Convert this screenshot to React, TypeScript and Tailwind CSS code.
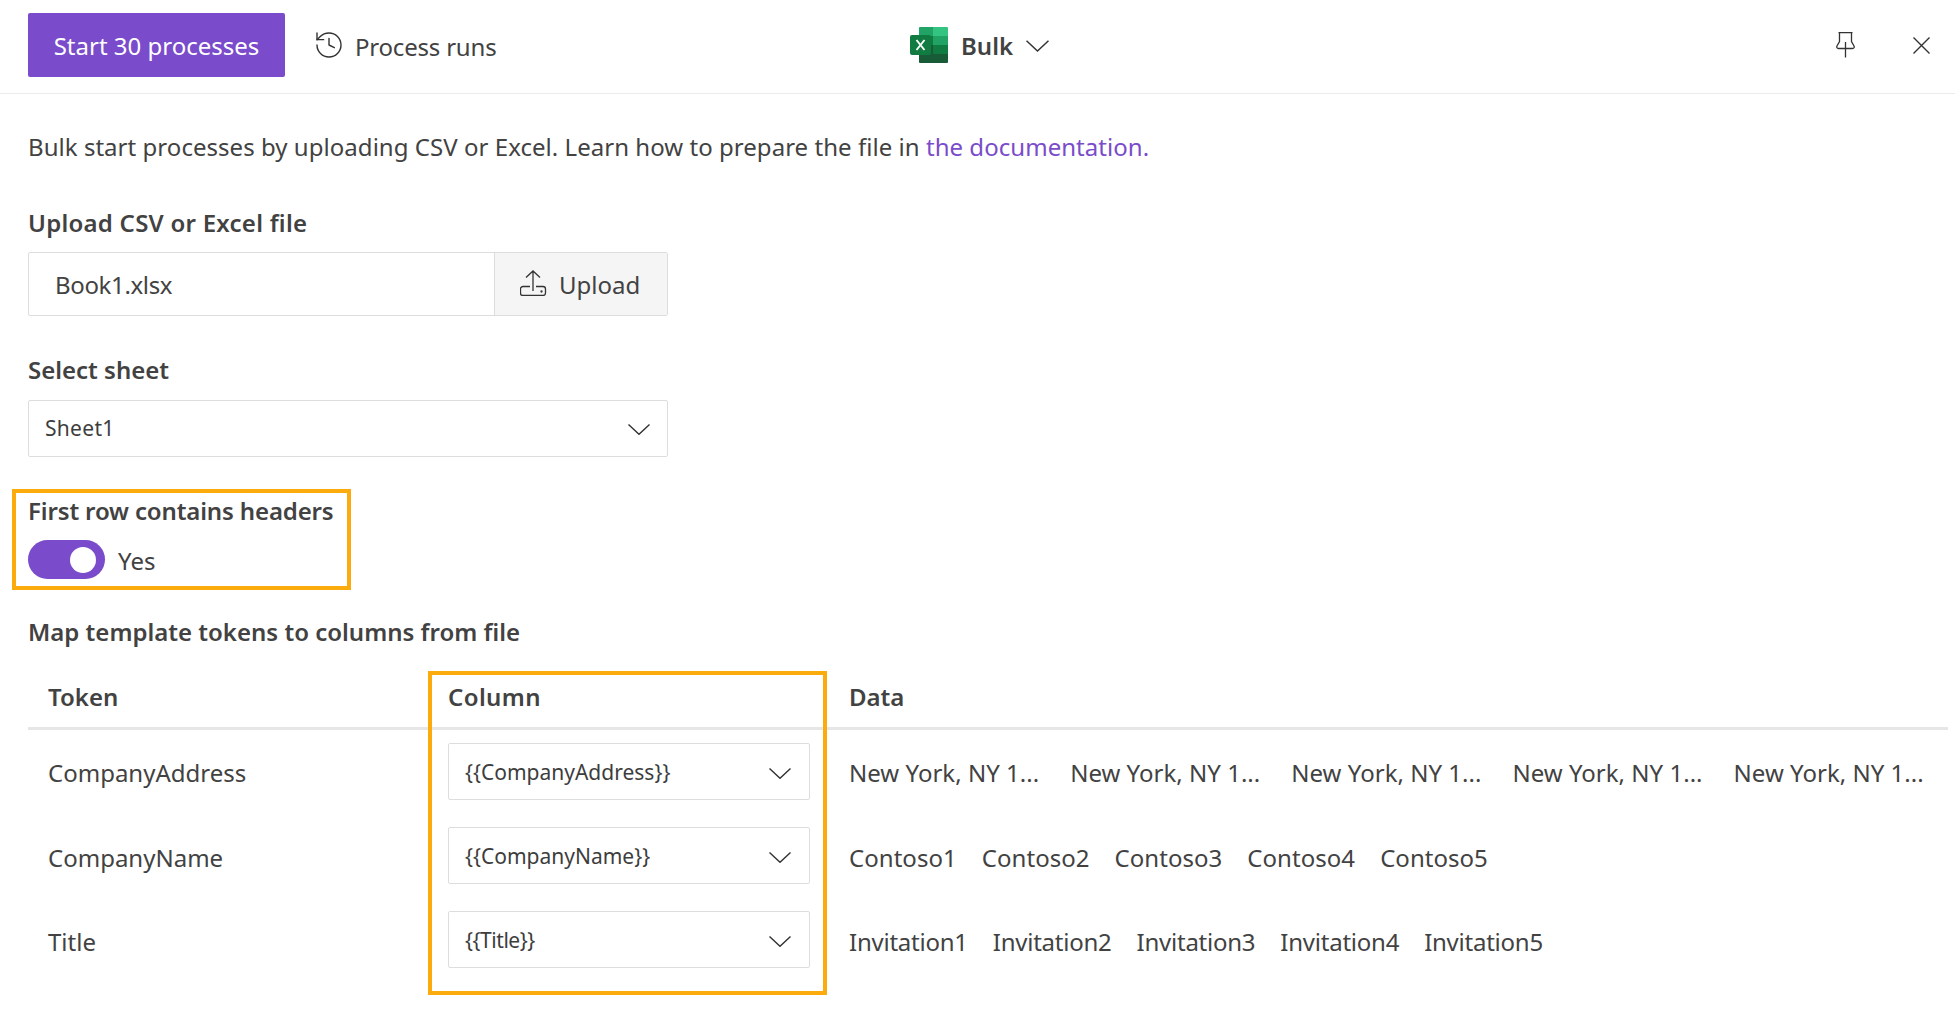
import React from "react";
import { History } from "lucide-react";

const Chevron = ({ w = 22, h = 11 }: { w?: number; h?: number }) => (
  <svg width={w} height={h} viewBox="0 0 22 11" fill="none" stroke="#333333" strokeWidth="1.4">
    <path d="M0.5 0.5 L11 10.3 L21.5 0.5" />
  </svg>
);

const Excel = () => (
  <svg width="38" height="36" viewBox="0 0 38 36">
    <path d="M9 1a1 1 0 0 1 1-1h13v9H9z" fill="#21A366" />
    <path d="M23 0h14a1 1 0 0 1 1 1v8H23z" fill="#33C481" />
    <rect x="9" y="9" width="14" height="9" fill="#107C41" />
    <rect x="23" y="9" width="15" height="9" fill="#21A366" />
    <rect x="9" y="18" width="14" height="9" fill="#185C37" />
    <rect x="23" y="18" width="15" height="9" fill="#107C41" />
    <path d="M9 27h29v8a1 1 0 0 1-1 1H10a1 1 0 0 1-1-1z" fill="#185C37" />
    <rect x="0" y="8" width="21" height="20" rx="2" fill="#107C41" />
    <path d="M6.5 13l8 10M14.500 13l-8 10" stroke="#ffffff" strokeWidth="1.900" fill="none" />
  </svg>
);

const SelectBox = ({ label, track }: { label: string; track: string }) => (
  <div className="flex h-[57px] w-[362px] items-center justify-between rounded-[2px] border border-[#dddddd] pl-[16px] pr-[18px]">
    <span className={`text-[21px] leading-[32px] text-[#3d3d3d] ${track}`}>{label}</span>
    <span className="mt-[3px] flex">
      <Chevron />
    </span>
  </div>
);

const rows = [
  {
    token: "CompanyAddress",
    column: "{{CompanyAddress}}",
    gap: "gap-[31px]",
    pad: "pt-[13px]",
    track: "tracking-[0.02px]",
    selTrack: "tracking-normal",
    data: ["New York, NY 1...", "New York, NY 1...", "New York, NY 1...", "New York, NY 1...", "New York, NY 1..."],
  },
  {
    token: "CompanyName",
    column: "{{CompanyName}}",
    gap: "gap-[25px]",
    pad: "pt-[14px]",
    track: "tracking-[0.04px]",
    selTrack: "tracking-normal",
    data: ["Contoso1", "Contoso2", "Contoso3", "Contoso4", "Contoso5"],
  },
  {
    token: "Title",
    column: "{{Title}}",
    gap: "gap-[25px]",
    pad: "pt-[14px]",
    track: "tracking-[-0.24px]",
    selTrack: "tracking-[-0.45px]",
    data: ["Invitation1", "Invitation2", "Invitation3", "Invitation4", "Invitation5"],
  },
];

export default function App() {
  return (
    <div className="h-[1024px] w-full overflow-hidden bg-white font-['Noto_Sans',sans-serif] text-[24px] leading-[34px] text-[#424242]">
      <header className="relative flex h-[94px] items-center border-b border-[#ebebeb] pl-[28px] pr-[25px]">
        <button className="mt-[-3px] flex h-[64px] w-[257px] items-center justify-center rounded-[2px] bg-[#7a4bcb] pt-[2px] text-white">
          Start 30 processes
        </button>
        <div className="ml-[28px] flex items-center gap-[10px]">
          <span className="mt-[-4px] flex">
            <History size={32} strokeWidth={1.05} color="#333333" />
          </span>
          <span className="tracking-[-0.2px]">Process runs</span>
        </div>
        <div className="absolute left-[910px] top-[27px] flex items-center">
          <Excel />
          <span className="ml-[13px] mt-[2px] font-semibold">Bulk</span>
          <span className="ml-[13px] mt-[1px] flex">
            <Chevron w={23} h={12} />
          </span>
        </div>
        <div className="ml-auto flex items-center gap-[57px]">
          <svg className="mt-[-3px]" width="20" height="26" viewBox="0 0 20 26" fill="none" stroke="#333333" strokeWidth="1.3">
            <path d="M2.500 0.700h14M3.500 0.700v8.800l-2.500 4.500c-0.600 1.200 0 2.500 1.500 2.500h14c1.500 0 2.100-1.300 1.500-2.500l-2.500-4.500v-8.800M9.500 10v15.500" />
          </svg>
          <svg className="mt-[-2px]" width="17" height="17" viewBox="0 0 17 17" fill="none" stroke="#333333" strokeWidth="1.4">
            <path d="M0.500 0.500l16 16M16.500 0.500l-16 16" />
          </svg>
        </div>
      </header>

      <main>
        <p className="ml-[28px] mt-[36px] tracking-[0.04px]">
          Bulk start processes by uploading CSV or Excel. Learn how to prepare the file in{" "}
          <a className="text-[#7a4bcb]">the documentation.</a>
        </p>

        <label className="ml-[28px] mt-[42px] block font-semibold tracking-[0.25px]">Upload CSV or Excel file</label>
        <div className="ml-[28px] mt-[12px] flex h-[64px] w-[640px] rounded-[2px] border border-[#dddddd]">
          <div className="flex flex-1 items-center pl-[26px] pt-[2px] tracking-[-0.35px]">Book1.xlsx</div>
          <div className="flex w-[173px] items-center gap-[12px] border-l border-[#dddddd] bg-[#f5f5f5] pl-[25px]">
            <svg className="mt-[-2px]" width="27" height="26" viewBox="0 0 27 26" fill="none" stroke="#333333" strokeWidth="1.3">
              <path d="M13 21V1M6 7.500L13 1l7 6.500M10 16.500H3a2.500 2.500 0 0 0-2.500 2.500v4A2.500 2.500 0 0 0 3 25.500h20a2.500 2.500 0 0 0 2.500-2.500v-4a2.500 2.500 0 0 0-2.500-2.500h-7" />
              <circle cx="21.500" cy="21.500" r="0.500" fill="#333333" />
            </svg>
            <span className="pt-[2px]">Upload</span>
          </div>
        </div>

        <label className="ml-[28px] mt-[37px] block font-semibold">Select sheet</label>
        <div className="ml-[28px] mt-[13px] flex h-[57px] w-[640px] items-center justify-between rounded-[2px] border border-[#dddddd] pl-[16px] pr-[17px]">
          <span className="mt-[-2px] text-[21px] leading-[32px] tracking-[0.3px] text-[#3d3d3d]">Sheet1</span>
          <span className="mt-[2px] flex">
            <Chevron />
          </span>
        </div>

        <section className="ml-[12px] mt-[32px] h-[101px] w-[339px] border-4 border-[#fbab0b] pl-[12px] pt-[1px]">
          <label className="block font-semibold tracking-[-0.14px]">First row contains headers</label>
          <div className="mt-[12px] flex items-center gap-[13px]">
            <div className="flex h-[39px] w-[77px] items-center justify-end rounded-full bg-[#7a4bcb] pr-[9px]">
              <div className="h-[26px] w-[26px] rounded-full bg-white" />
            </div>
            <span className="pt-[2px]">Yes</span>
          </div>
        </section>

        <label className="ml-[28px] mt-[25px] block font-semibold">Map template tokens to columns from file</label>

        <div className="relative ml-[28px] mr-[7px] pt-[1px]">
          <div className="flex h-[80px] border-b-[3px] border-[#e6e6e6] pt-[30px] font-semibold">
            <div className="w-[420px] pl-[20px]">Token</div>
            <div className="w-[401px] tracking-[0.4px]">Column</div>
            <div>Data</div>
          </div>
          {rows.map((r) => (
            <div key={r.token} className="flex h-[84px] items-start pt-[13px]">
              <div className={`w-[420px] pl-[20px] ${r.pad}`}>{r.token}</div>
              <div className="w-[401px]">
                <SelectBox label={r.column} track={r.selTrack} />
              </div>
              <div className={`flex ${r.gap} ${r.pad} ${r.track}`}>
                {r.data.map((d, i) => (
                  <span key={i} className="whitespace-nowrap">
                    {d}
                  </span>
                ))}
              </div>
            </div>
          ))}
          <div className="pointer-events-none absolute left-[400px] top-[22px] h-[324px] w-[399px] border-4 border-[#fbab0b]" />
        </div>
      </main>
    </div>
  );
}
